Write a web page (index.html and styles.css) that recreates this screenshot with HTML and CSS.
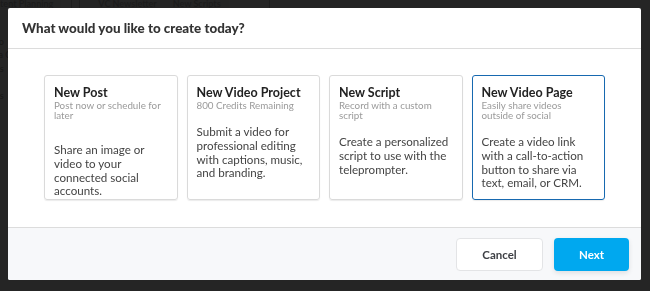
FILE: index.html
```html
<!DOCTYPE html>
<html lang="en">
<head>
  <meta charset="UTF-8" />
  <meta name="viewport" content="width=device-width, initial-scale=1.0"/>
  <title>Create</title>
  <link rel="stylesheet" href="styles.css">
</head>
<body>
  <!-- page behind the modal -->
  <div class="page">
    <div class="tabs">
      <span class="tab">Content Planning</span>
      <span class="tab-sep"></span>
      <span class="tab">VC Newsletter</span>
      <span class="tab">New Scripts</span>
      <span class="tab-sep wide"></span>
    </div>
    <div class="side-list">
      <div>Photo</div>
      <div>Add a C</div>
      <div>Notes</div>
      <div>Your</div>
      <div>Notes</div>
    </div>
  </div>

  <div class="overlay">
    <div class="modal">
      <div class="modal-header">
        <h2>What would you like to create today?</h2>
      </div>

      <div class="modal-body">
        <div class="card-grid">
          <div class="option-card option-post">
            <div class="option-title">New Post</div>
            <div class="option-sub">Post now or schedule for later</div>
            <p class="option-desc">Share an image or video to your connected social accounts.</p>
          </div>
          <div class="option-card">
            <div class="option-title">New Video Project</div>
            <div class="option-sub">800 Credits Remaining</div>
            <p class="option-desc">Submit a video for professional editing with captions, music, and branding.</p>
          </div>
          <div class="option-card">
            <div class="option-title">New Script</div>
            <div class="option-sub">Record with a custom script</div>
            <p class="option-desc">Create a personalized script to use with the teleprompter.</p>
          </div>
          <div class="option-card selected">
            <div class="option-title">New Video Page</div>
            <div class="option-sub">Easily share videos outside of social</div>
            <p class="option-desc">Create a video link with a call-to-action button to share via text, email, or CRM.</p>
          </div>
        </div>
      </div>

      <div class="modal-footer">
        <button class="btn btn-cancel">Cancel</button>
        <button class="btn btn-next">Next</button>
      </div>
    </div>
  </div>
</body>
</html>
```

FILE: styles.css
```css
* { margin: 0; padding: 0; box-sizing: border-box; }
html, body { height: 100%; }
body {
  font-family: 'Lato', 'Open Sans', sans-serif;
  background: #fff;
  color: #333;
  overflow: hidden;
}

/* background page */
.page { height: 100%; background: #f4f4f4; }
.tabs {
  display: flex;
  align-items: center;
  height: 12px;
  margin-top: -3px;
  margin-left: -24px;
  font-size: 9px;
  font-weight: bold;
  color: #777;
}
.tab { padding: 0 8px; background: #e8e8e8; }
.tab-sep { width: 9px; height: 14px; border-left: 1px solid #888; border-right: 1px solid #888; margin: 0 10px; }
.tab-sep.wide { width: 1px; border-right: none; margin-left: 40px; }
.side-list {
  margin-top: 26px;
  margin-left: -20px;
  font-size: 9px;
  line-height: 13.4px;
  color: #444;
}

/* modal */
.overlay {
  position: fixed;
  top: 0; left: 0;
  width: 100%; height: 100%;
  background: rgba(20,20,20,0.93);
  padding: 8px;
}
.modal {
  width: 633px;
  height: 272px;
  background: #fff;
  border-radius: 2px;
  display: flex;
  flex-direction: column;
  overflow: hidden;
}
.modal-header {
  height: 41px;
  display: flex;
  align-items: center;
  padding: 0 14px;
  border-bottom: 1px solid #dcdcdc;
}
.modal-header h2 {
  font-size: 13.4px;
  font-weight: 900;
  color: #333;
}
.modal-body {
  flex: 1;
  padding: 26px 36px 0;
  border-bottom: 1px solid #dcdcdc;
}
.card-grid {
  display: grid;
  grid-template-columns: repeat(4, 1fr);
  gap: 9px;
}
.option-card {
  height: 125px;
  border: 1px solid #dadada;
  border-radius: 3px;
  padding: 9px 9px;
  box-shadow: 0 1px 1px rgba(0,0,0,.08);
}
.option-card.selected { border-color: #1769b0; }
.option-title {
  font-size: 12.5px;
  font-weight: bold;
  line-height: 15px;
  color: #222;
}
.option-sub {
  font-size: 9.8px;
  line-height: 10px;
  color: #9a9a9a;
}
.option-desc {
  margin-top: 15px;
  font-size: 11.6px;
  line-height: 13.8px;
  color: #444;
}
.option-post .option-desc { margin-top: 23px; }

.modal-footer {
  height: 52px;
  background: #f7f8fa;
  display: flex;
  justify-content: flex-end;
  align-items: center;
  gap: 11px;
  padding: 0 12px;
}
.btn {
  height: 33px;
  border-radius: 4px;
  font-family: 'Lato', sans-serif;
  font-size: 11.5px;
  font-weight: bold;
  cursor: pointer;
}
.btn-cancel {
  width: 87px;
  background: #fff;
  border: 1px solid #e3e4e6;
  color: #3d3f44;
}
.btn-next {
  width: 75px;
  background: #00a8ef;
  border: none;
  color: #fff;
  box-shadow: 0 2px 5px rgba(0,0,0,.1);
}
```
